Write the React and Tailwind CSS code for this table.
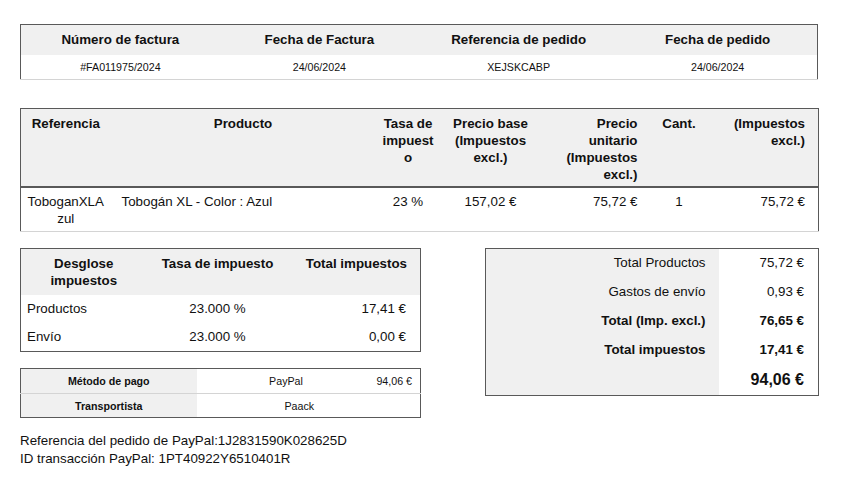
const dark = 'border-[#595959]'

function InvoiceHeader() {
  const cols = [
    ['Número de factura', '#FA011975/2024'],
    ['Fecha de Factura', '24/06/2024'],
    ['Referencia de pedido', 'XEJSKCABP'],
    ['Fecha de pedido', '24/06/2024'],
  ]
  return (
    <table className={`w-full table-fixed border-collapse border-t border-x ${dark}`}>
      <thead>
        <tr className="bg-[#f0f0f0] h-[30px]">
          {cols.map(([label]) => (
            <th key={label} className="text-[13.33px] font-bold text-center align-middle">
              {label}
            </th>
          ))}
        </tr>
      </thead>
      <tbody>
        <tr className="h-[25px] border-b border-[#d4d4d4]">
          {cols.map(([label, value]) => (
            <td key={label} className="text-[10.67px] text-center align-middle">
              {value}
            </td>
          ))}
        </tr>
      </tbody>
    </table>
  )
}

function ProductTable() {
  const th = 'text-[13.33px] font-bold leading-[17px] align-top pt-[6px]'
  const td = 'text-[13.33px] leading-[17px] align-top pt-[5px]'
  return (
    <table className={`w-full table-fixed border-collapse border-t border-x ${dark}`}>
      <colgroup>
        <col className="w-[90px]" />
        <col className="w-[265px]" />
        <col className="w-[65px]" />
        <col className="w-[100px]" />
        <col className="w-[105px]" />
        <col className="w-[67px]" />
        <col className="w-[106px]" />
      </colgroup>
      <thead>
        <tr className={`bg-[#f0f0f0] h-[78px] border-b-2 ${dark}`}>
          <th className={`${th} text-center px-[4px]`}>Referencia</th>
          <th className={`${th} text-center px-[8px]`}>Producto</th>
          <th className={`${th} text-center px-[5px] [overflow-wrap:anywhere]`}>Tasa de impuesto</th>
          <th className={`${th} text-center px-[8px]`}>Precio base (Impuestos excl.)</th>
          <th className={`${th} text-right pl-[20px] pr-[8px]`}>Precio unitario (Impuestos excl.)</th>
          <th className={`${th} text-center px-[4px]`}>Cant.</th>
          <th className={`${th} text-right pl-[13px] pr-[13px]`}>(Impuestos excl.)</th>
        </tr>
      </thead>
      <tbody>
        <tr className="h-[45px] border-b border-[#d4d4d4]">
          <td className={`${td} text-center px-[4px] [overflow-wrap:anywhere]`}>ToboganXLAzul</td>
          <td className={`${td} text-left pl-[11px]`}>Tobogán XL - Color : Azul</td>
          <td className={`${td} text-center`}>23 %</td>
          <td className={`${td} text-center`}>157,02 €</td>
          <td className={`${td} text-right pr-[8px]`}>75,72 €</td>
          <td className={`${td} text-center`}>1</td>
          <td className={`${td} text-right pr-[13px]`}>75,72 €</td>
        </tr>
      </tbody>
    </table>
  )
}

function TaxBreakdown() {
  const rows = [
    ['Productos', '23.000 %', '17,41 €'],
    ['Envío', '23.000 %', '0,00 €'],
  ]
  return (
    <table className={`w-full table-fixed border-collapse border ${dark}`}>
      <colgroup>
        <col className="w-[126px]" />
        <col className="w-[142px]" />
        <col className="w-[132px]" />
      </colgroup>
      <thead>
        <tr className="bg-[#f0f0f0] h-[46px]">
          <th className="text-[13.33px] font-bold leading-[17px] align-top pt-[6px] text-center px-[8px]">
            Desglose impuestos
          </th>
          <th className="text-[13.33px] font-bold leading-[17px] align-top pt-[6px] text-center">
            Tasa de impuesto
          </th>
          <th className="text-[13.33px] font-bold leading-[17px] align-top pt-[6px] text-right pr-[13px]">
            Total impuestos
          </th>
        </tr>
      </thead>
      <tbody>
        {rows.map(([name, rate, total], i) => (
          <tr key={name} className={i === 0 ? 'h-[29px]' : 'h-[28px]'}>
            <td className="text-[13.33px] pl-[6px] align-middle">{name}</td>
            <td className="text-[13.33px] text-center align-middle">{rate}</td>
            <td className="text-[13.33px] text-right pr-[14px] align-middle">{total}</td>
          </tr>
        ))}
      </tbody>
    </table>
  )
}

function PaymentTable() {
  return (
    <table className={`w-full table-fixed border-collapse border ${dark}`}>
      <colgroup>
        <col className="w-[176px]" />
        <col className="w-[179px]" />
        <col className="w-[45px]" />
      </colgroup>
      <tbody>
        <tr className="h-[25px] border-b border-[#d4d4d4]">
          <td className="bg-[#f0f0f0] text-[10.67px] font-bold text-center align-middle">Método de pago</td>
          <td className="text-[10.67px] text-center align-middle">PayPal</td>
          <td className="text-[10.67px] text-right pr-[8px] align-middle whitespace-nowrap">94,06 €</td>
        </tr>
        <tr className="h-[24px]">
          <td className="bg-[#f0f0f0] text-[10.67px] font-bold text-center align-middle">Transportista</td>
          <td colSpan={2} className="text-[10.67px] text-center pr-[18px] align-middle">Paack</td>
        </tr>
      </tbody>
    </table>
  )
}

function Totals() {
  const rows = [
    ['Total Productos', '75,72 €', false],
    ['Gastos de envío', '0,93 €', false],
    ['Total (Imp. excl.)', '76,65 €', true],
    ['Total impuestos', '17,41 €', true],
  ]
  return (
    <table className={`w-full table-fixed border-collapse border ${dark}`}>
      <colgroup>
        <col className="w-[233px]" />
        <col className="w-[100px]" />
      </colgroup>
      <tbody>
        {rows.map(([label, value, bold]) => (
          <tr key={label} className="h-[29px]">
            <td className={`bg-[#f0f0f0] text-[13.33px] text-right pr-[13px] align-middle ${bold ? 'font-bold' : ''}`}>
              {label}
            </td>
            <td className={`text-[13.33px] text-right pr-[14px] align-middle ${bold ? 'font-bold' : ''}`}>
              {value}
            </td>
          </tr>
        ))}
        <tr className="h-[31px]">
          <td className="bg-[#f0f0f0]" />
          <td className="text-[16px] font-bold text-right pr-[14px] align-middle">94,06 €</td>
        </tr>
      </tbody>
    </table>
  )
}

export default function App() {
  return (
    <div className="w-[843px] h-[480px] bg-white text-[#111] font-['Liberation_Sans',Arial,sans-serif] pl-[20px] pr-[25px] pt-[24px]">
      <InvoiceHeader />
      <div className="mt-[28px]">
        <ProductTable />
      </div>
      <div className="mt-[16px] flex items-start justify-between">
        <div className="w-[400px]">
          <TaxBreakdown />
          <div className="mt-[16px]">
            <PaymentTable />
          </div>
        </div>
        <div className="w-[333px]">
          <Totals />
        </div>
      </div>
      <div className="mt-[14px] text-[13.33px] leading-[18px] text-[#111]">
        <p>Referencia del pedido de PayPal:1J2831590K028625D</p>
        <p>ID transacción PayPal: 1PT40922Y6510401R</p>
      </div>
    </div>
  )
}
